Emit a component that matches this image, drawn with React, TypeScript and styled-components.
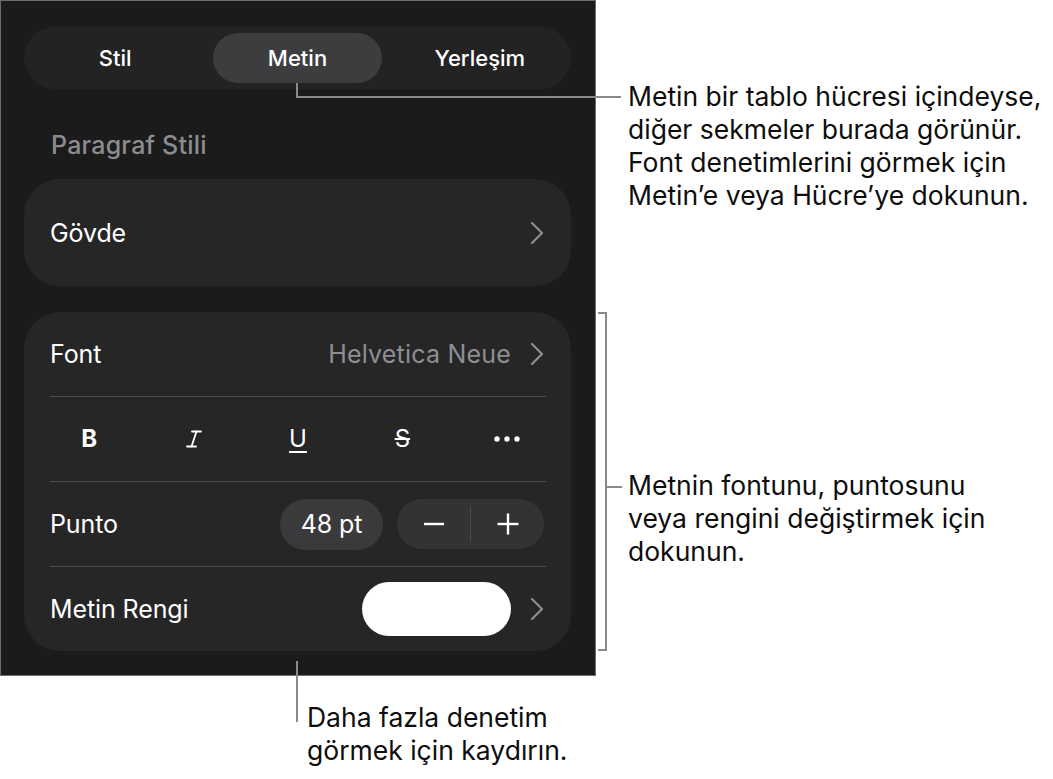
import React from "react";
import styled, { createGlobalStyle } from "styled-components";

const GlobalStyle = createGlobalStyle`
  html, body {
    margin: 0;
    padding: 0;
    background: #ffffff;
  }
  body {
    font-family: Inter, "Noto Sans", "Liberation Sans", sans-serif;
  }
`;

const Stage = styled.div`
  position: relative;
  width: 1053px;
  height: 779px;
  overflow: hidden;
  background: #ffffff;
`;

const Panel = styled.div`
  box-sizing: border-box;
  width: 596px;
  height: 676px;
  border: 1px solid #6c6c6c;
  background: #1b1b1c;
  padding: 26px 24px 0 23px;
  display: flex;
  flex-direction: column;
  color: #ffffff;
`;

const Segment = styled.div`
  height: 62px;
  box-sizing: border-box;
  padding: 6px 0;
  border-radius: 31px;
  background: #232324;
  display: grid;
  grid-template-columns: repeat(3, 1fr);
`;

const Tab = styled.div<{ $active?: boolean }>`
  margin: 0 6.5px;
  border-radius: 25px;
  background: ${(p) => (p.$active ? "#3d3d3f" : "transparent")};
  display: flex;
  align-items: center;
  justify-content: center;
  font-size: 22px;
  font-weight: 500;
`;

const SectionLabel = styled.div`
  margin: 41px 0 0 27px;
  height: 30px;
  line-height: 30px;
  font-size: 25px;
  font-weight: 500;
  letter-spacing: 0.2px;
  color: #8c8c90;
`;

const Card = styled.div<{ $height?: number }>`
  box-sizing: border-box;
  background: #262627;
  border-radius: 36px;
  padding: 0 25px 0 26px;
  ${(p) => (p.$height ? `height: ${p.$height}px;` : "")}
  display: flex;
  flex-direction: column;
  justify-content: center;
`;

const Row = styled.div`
  height: 84px;
  display: flex;
  align-items: center;
  justify-content: space-between;
  font-size: 25px;
  letter-spacing: -0.1px;
`;

const Divider = styled.div`
  height: 1px;
  background: #4c4c4e;
`;

const Trailing = styled.div`
  display: flex;
  align-items: center;
`;

const Value = styled.span`
  color: #8e8e93;
  margin-right: 19px;
  letter-spacing: 0.2px;
`;

const FormatRow = styled.div`
  height: 84px;
  margin: 0 -13px;
  display: grid;
  grid-template-columns: repeat(5, 1fr);
  align-items: center;
  justify-items: center;
`;

const FormatGlyph = styled.span<{ $deco?: string; $weight?: number }>`
  font-size: 24px;
  font-weight: ${(p) => p.$weight ?? 400};
  text-decoration: ${(p) => p.$deco ?? "none"};
  text-decoration-thickness: 2px;
  text-underline-offset: 4px;
  line-height: 1;
`;

const SizePill = styled.div`
  width: 103px;
  height: 51px;
  border-radius: 26px;
  background: #3a3a3c;
  display: flex;
  align-items: center;
  justify-content: center;
  margin-right: 14px;
`;

const Stepper = styled.div`
  width: 147px;
  height: 50px;
  border-radius: 25px;
  background: #333335;
  display: flex;
  align-items: center;
  margin-right: 2px;
`;

const StepButton = styled.div`
  flex: 1;
  display: flex;
  align-items: center;
  justify-content: center;
`;

const StepDivider = styled.div`
  width: 1px;
  height: 36px;
  background: #4a4a4c;
`;

const Swatch = styled.div`
  width: 149px;
  height: 54px;
  border-radius: 27px;
  background: #ffffff;
  margin-right: 19px;
`;

const Callout = styled.div<{ $x: number; $y: number }>`
  position: absolute;
  left: ${(p) => p.$x}px;
  top: ${(p) => p.$y}px;
  font-size: 26.5px;
  line-height: 33px;
  color: #0d0d0d;
  white-space: pre;
`;

const Leaders = styled.svg`
  position: absolute;
  left: 0;
  top: 0;
  pointer-events: none;
`;

const Chevron = () => (
  <svg width="14" height="24" viewBox="0 0 14 24" style={{ marginRight: 2 }}>
    <polyline points="2,2 12,12 2,22" fill="none" stroke="#8e8e93" strokeWidth="2.2" strokeLinecap="round" strokeLinejoin="round" />
  </svg>
);

const ItalicIcon = () => (
  <svg width="16" height="18" viewBox="0 0 16 18">
    <g fill="none" stroke="#ffffff" strokeWidth="1.8" strokeLinecap="round">
      <line x1="6" y1="1.5" x2="15" y2="1.5" />
      <line x1="10.5" y1="1.5" x2="5.5" y2="16.5" />
      <line x1="1" y1="16.5" x2="10" y2="16.5" />
    </g>
  </svg>
);

const MoreIcon = () => (
  <svg width="26" height="6" viewBox="0 0 26 6">
    <circle cx="3" cy="3" r="2.7" fill="#ffffff" />
    <circle cx="13" cy="3" r="2.7" fill="#ffffff" />
    <circle cx="23" cy="3" r="2.7" fill="#ffffff" />
  </svg>
);

const MinusIcon = () => (
  <svg width="22" height="22" viewBox="0 0 22 22">
    <line x1="1" y1="11" x2="21" y2="11" stroke="#ffffff" strokeWidth="2.4" />
  </svg>
);

const PlusIcon = () => (
  <svg width="22" height="22" viewBox="0 0 22 22">
    <line x1="0.5" y1="11" x2="21.5" y2="11" stroke="#ffffff" strokeWidth="2.4" />
    <line x1="11" y1="0.5" x2="11" y2="21.5" stroke="#ffffff" strokeWidth="2.4" />
  </svg>
);

const tabs = ["Stil", "Metin", "Yerleşim"];

export default function App() {
  return (
    <Stage>
      <GlobalStyle />
      <Panel>
        <Segment>
          {tabs.map((t) => (
            <Tab key={t} $active={t === "Metin"}>
              {t}
            </Tab>
          ))}
        </Segment>

        <SectionLabel>Paragraf Stili</SectionLabel>

        <Card $height={107} style={{ marginTop: 19 }}>
          <Row>
            <span>Gövde</span>
            <Chevron />
          </Row>
        </Card>

        <Card style={{ marginTop: 26 }}>
          <Row>
            <span>Font</span>
            <Trailing>
              <Value>Helvetica Neue</Value>
              <Chevron />
            </Trailing>
          </Row>
          <Divider />
          <FormatRow>
            <FormatGlyph $weight={700}>B</FormatGlyph>
            <ItalicIcon />
            <FormatGlyph $deco="underline">U</FormatGlyph>
            <FormatGlyph $deco="line-through">S</FormatGlyph>
            <MoreIcon />
          </FormatRow>
          <Divider />
          <Row>
            <span>Punto</span>
            <Trailing>
              <SizePill>48 pt</SizePill>
              <Stepper>
                <StepButton>
                  <MinusIcon />
                </StepButton>
                <StepDivider />
                <StepButton>
                  <PlusIcon />
                </StepButton>
              </Stepper>
            </Trailing>
          </Row>
          <Divider />
          <Row>
            <span>Metin Rengi</span>
            <Trailing>
              <Swatch />
              <Chevron />
            </Trailing>
          </Row>
        </Card>
      </Panel>

      <Leaders width="1053" height="779" viewBox="0 0 1053 779">
        <g fill="none" stroke="#8a8a8a" strokeWidth="2">
          <path d="M297 83 V97 H621" />
          <path d="M598 313 H606 V650 H598" />
          <path d="M606 487 H622" />
          <path d="M297 661 V722" />
        </g>
      </Leaders>

      <Callout $x={628} $y={80}>
        {"Metin bir tablo hücresi içindeyse,\ndiğer sekmeler burada görünür.\nFont denetimlerini görmek için\nMetin’e veya Hücre’ye dokunun."}
      </Callout>
      <Callout $x={628} $y={469}>
        {"Metnin fontunu, puntosunu\nveya rengini değiştirmek için\ndokunun."}
      </Callout>
      <Callout $x={307} $y={701}>
        {"Daha fazla denetim\ngörmek için kaydırın."}
      </Callout>
    </Stage>
  );
}
